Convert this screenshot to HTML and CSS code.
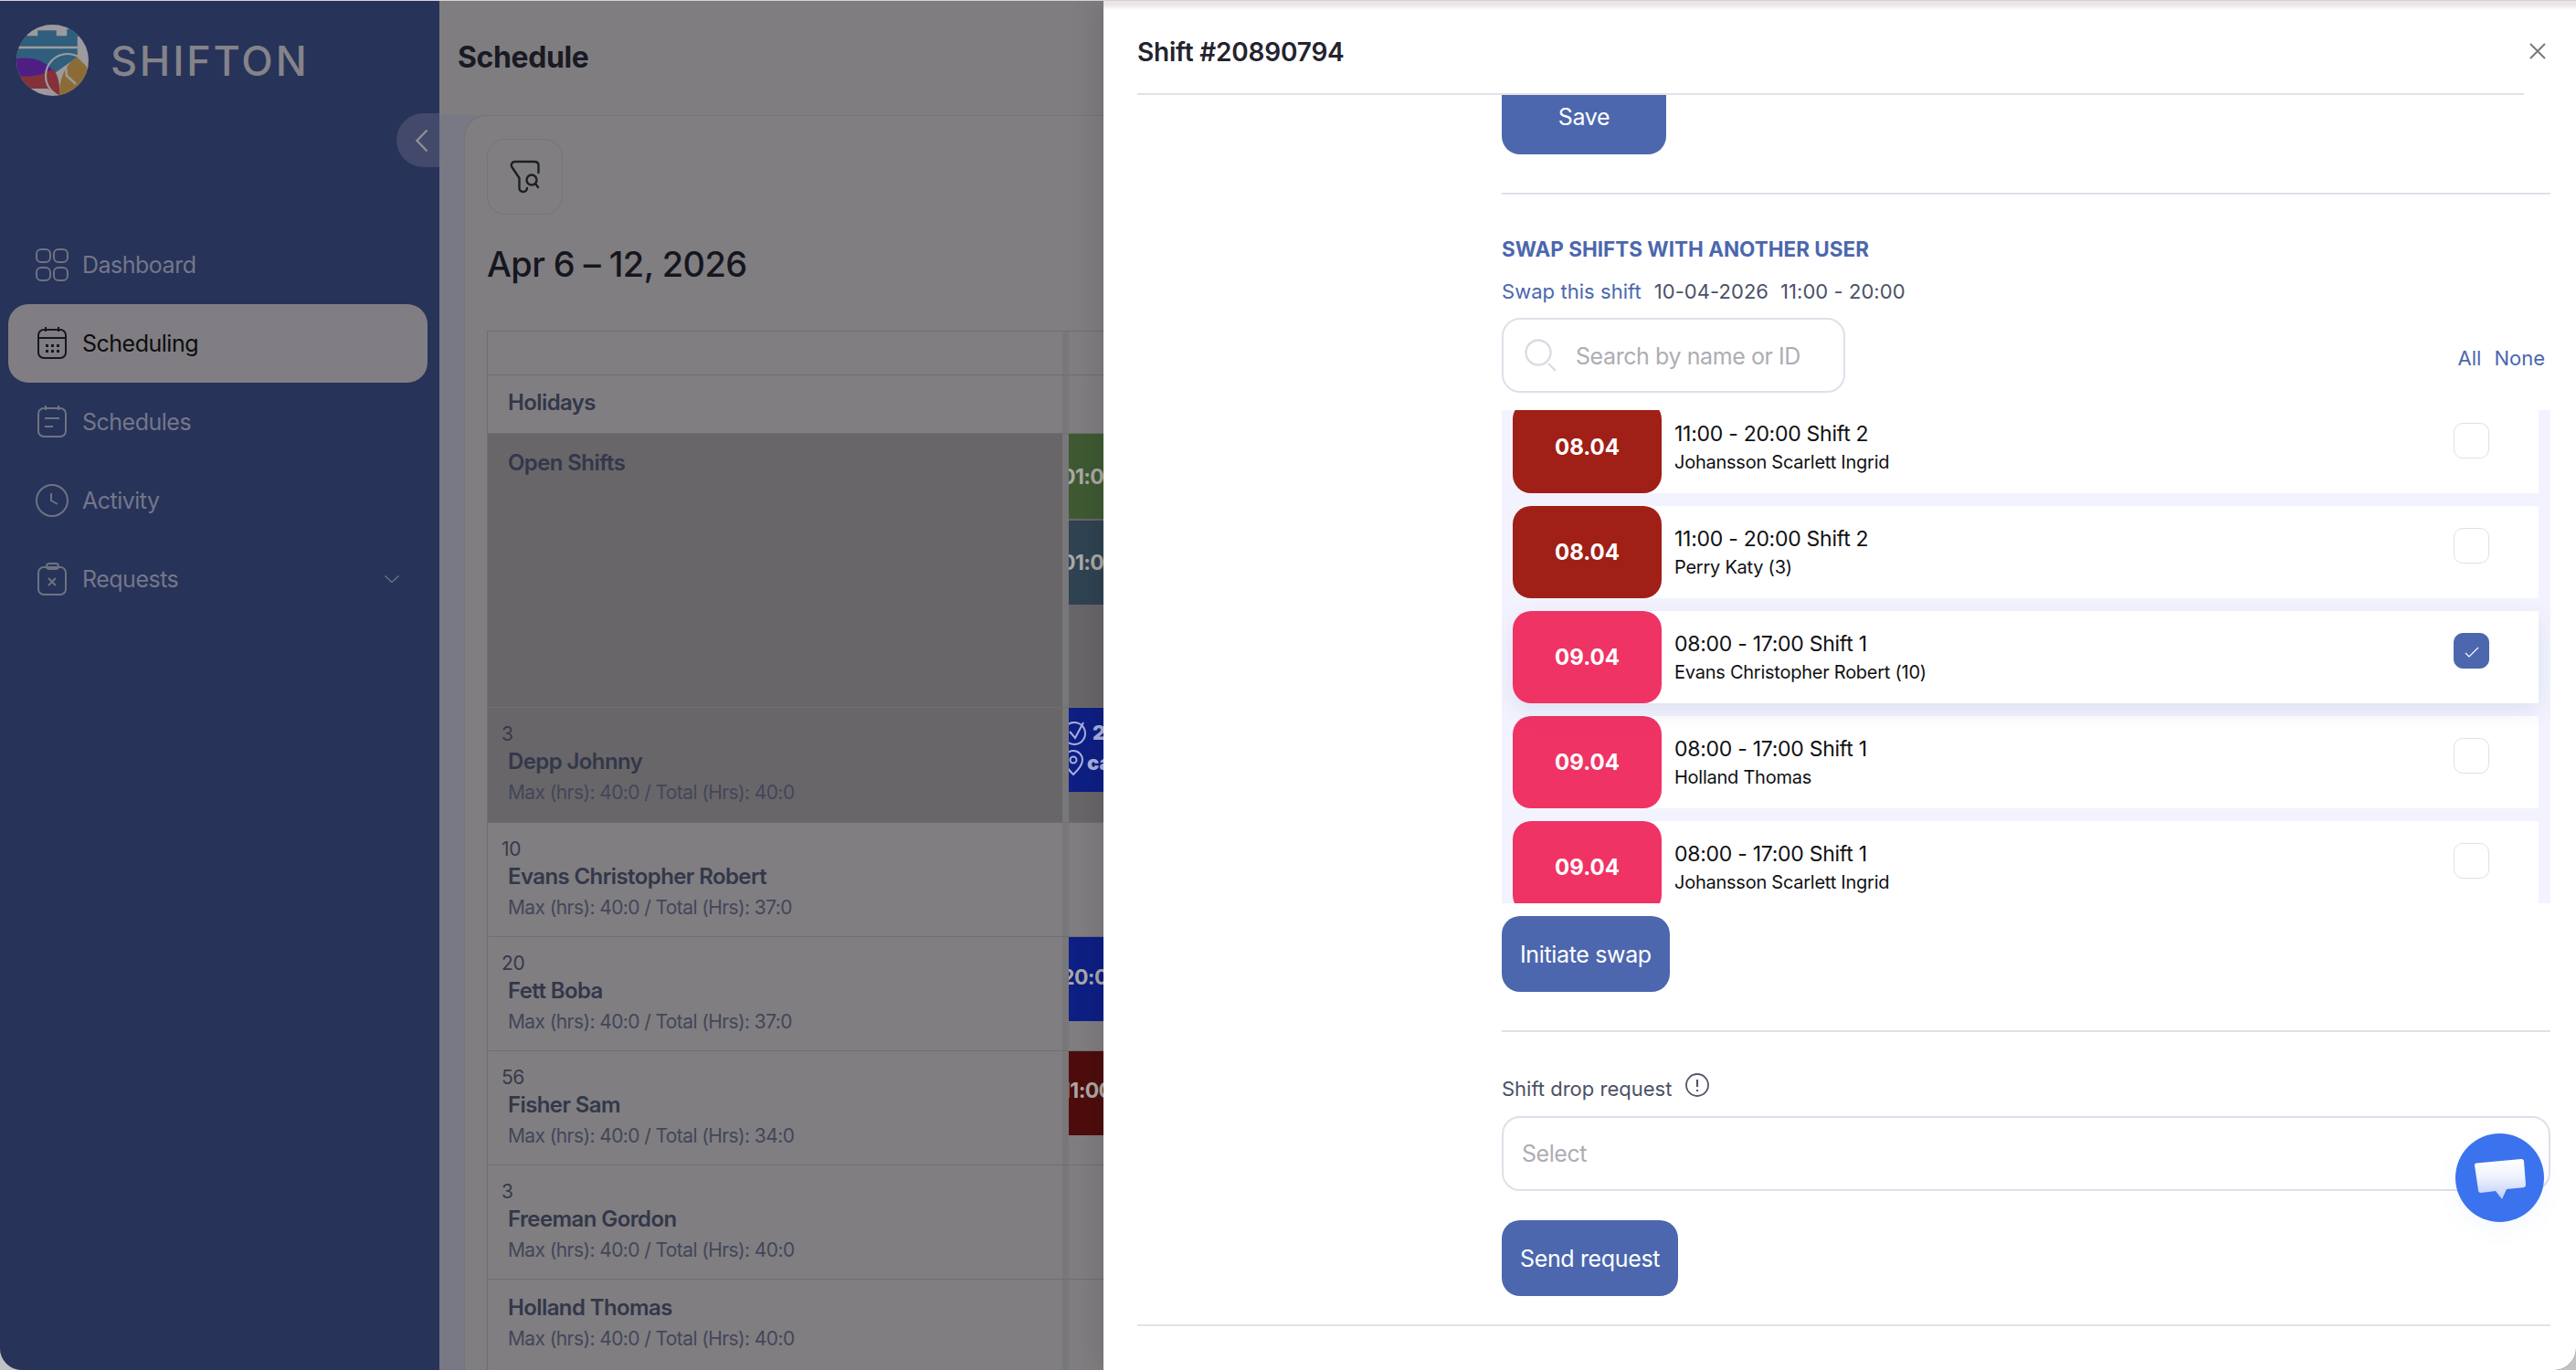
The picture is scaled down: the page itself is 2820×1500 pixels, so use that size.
FILE: index.html
```html
<!DOCTYPE html>
<html lang="en">
<head>
<meta charset="utf-8">
<title>Shifton Schedule</title>
<link rel="stylesheet" href="styles.css">
</head>
<body>
<div class="page">
  <aside class="sidebar">
    <div class="brand">
      <svg class="logo" viewBox="18 27 79 78" aria-hidden="true">
        <defs><clipPath id="lc"><ellipse cx="57.5" cy="66" rx="39.5" ry="39"/></clipPath></defs>
        <g clip-path="url(#lc)">
          <rect x="18" y="27" width="80" height="80" fill="#9c9a9e"/>
          <path d="M18 27H86V62L74 70 60 80 18 66Z" fill="#2f5f7c"/>
          <path d="M18 64C34 62 48 65 59 78L50 84H18Z" fill="#4f1e85"/>
          <path d="M18 83C30 84 44 84 52 78L59 76C64 84 66 94 65 105L52 97H26Z" fill="#83323a"/>
          <path d="M65 105C65 90 68 74 84 62L98 76V105Z" fill="#8b6c37"/>
          <path d="M30 38H40V32H63V38H72V30M20 52H86V40M86 52V62" fill="none" stroke="#9c9a9e" stroke-width="2.5"/>
          <path d="M30 27H86V32H72V38H63V32H40V38H30Z" fill="#9c9a9e"/>
          <circle cx="74" cy="83" r="24" fill="none" stroke="#9c9a9e" stroke-width="2.2"/>
          <path d="M72 72L73 83 83 92" fill="none" stroke="#9c9a9e" stroke-width="2.5"/>
        </g>
      </svg>
      <span class="wordmark">SHIFTON</span>
    </div>
    <button class="collapse" aria-label="Collapse">
      <svg width="14" height="26" viewBox="0 0 14 26"><path d="M12.5 1.5L1.5 13l11 11.5" fill="none" stroke="#8f8e93" stroke-width="2.4"/></svg>
    </button>
    <nav class="menu">
      <a class="item">
        <svg class="ico" viewBox="0 0 36 36"><g fill="none" stroke="currentColor" stroke-width="2"><rect x="1" y="1" width="15" height="14" rx="5"/><rect x="20" y="1" width="15" height="14" rx="5"/><rect x="1" y="21" width="15" height="14" rx="5"/><rect x="20" y="21" width="15" height="14" rx="5"/></g></svg>
        <span>Dashboard</span>
      </a>
      <a class="item active">
        <svg class="ico" viewBox="0 0 36 36"><g fill="none" stroke="currentColor" stroke-width="2"><rect x="3" y="3" width="30" height="31" rx="6"/><path d="M3 12H33M11 0V5M25 0V5"/></g><g fill="currentColor"><rect x="11" y="19" width="3" height="3"/><rect x="17" y="19" width="3" height="3"/><rect x="23" y="19" width="3" height="3"/><rect x="11" y="25" width="3" height="3"/><rect x="17" y="25" width="3" height="3"/><rect x="23" y="25" width="3" height="3"/></g></svg>
        <span>Scheduling</span>
      </a>
      <a class="item">
        <svg class="ico" viewBox="0 0 36 36"><g fill="none" stroke="currentColor" stroke-width="2"><rect x="3" y="3" width="30" height="31" rx="6"/><path d="M11 0V5M25 0V5M10 14H26M10 23H19"/></g></svg>
        <span>Schedules</span>
      </a>
      <a class="item">
        <svg class="ico" viewBox="0 0 36 36"><g fill="none" stroke="currentColor" stroke-width="2"><circle cx="18" cy="18" r="17"/><path d="M17 10V18L24 22"/></g></svg>
        <span>Activity</span>
      </a>
      <a class="item">
        <svg class="ico" viewBox="0 0 36 36"><g fill="none" stroke="currentColor" stroke-width="2"><rect x="3" y="5" width="30" height="30" rx="6"/><rect x="12" y="1" width="13" height="6" rx="3"/><path d="M14 17L22 25M22 17L14 25"/></g></svg>
        <span>Requests</span>
        <svg class="caret" viewBox="0 0 16 8"><path d="M.5.5L8 7.5 15.5.5" fill="none" stroke="currentColor" stroke-width="1.2"/></svg>
      </a>
    </nav>
  </aside>

  <main class="main">
    <h1 class="page-title">Schedule</h1>
    <div class="content">
      <section class="card">
        <button class="filter" aria-label="Filter">
          <svg width="33" height="37" viewBox="0 0 33 37"><g fill="none" stroke="#1d1e24" stroke-width="2.4" stroke-linecap="round" stroke-linejoin="round"><path d="M6 2H27C30 2 31.500 3.500 31.500 6V14M6 2C2.500 2 .8 5 2.500 8L10.500 20V31C10.500 36 18.500 36.500 19 31"/><circle cx="24" cy="22" r="5.500"/><path d="M28 26L31 30"/></g></svg>
        </button>
        <h2 class="range">Apr 6 – 12, 2026</h2>
        <div class="table">
          <div class="row head"><div class="who"></div><div class="day"></div></div>
          <div class="row holidays"><div class="who"><div class="name">Holidays</div></div><div class="day"></div></div>
          <div class="row open dim">
            <div class="who"><div class="name">Open Shifts</div></div>
            <div class="day stack">
              <div class="ev green"><span>01:00</span></div>
              <div class="ev teal"><span>01:00</span></div>
            </div>
          </div>
          <div class="row dim emp">
            <div class="who"><div class="num">3</div><div class="name">Depp Johnny</div><div class="hrs">Max (hrs): 40:0 / Total (Hrs): 40:0</div></div>
            <div class="day">
              <div class="ev blue tall">
                <div class="meta"><svg width="26" height="28" viewBox="0 0 26 28"><g fill="none" stroke="#aab0dc" stroke-width="2"><circle cx="12" cy="15" r="12"/><path d="M7 13L13 20 22 3"/></g></svg><b>2</b></div>
                <div class="meta pin"><svg width="24" height="28" viewBox="0 0 24 28"><g fill="none" stroke="#aab0dc" stroke-width="2"><path d="M11 27C4 20 1 16 1 11A10 10 0 0 1 21 11C21 16 18 20 11 27Z"/><circle cx="11" cy="11" r="3.500"/></g></svg><b>ca</b></div>
              </div>
            </div>
          </div>
          <div class="row emp">
            <div class="who"><div class="num">10</div><div class="name">Evans Christopher Robert</div><div class="hrs">Max (hrs): 40:0 / Total (Hrs): 37:0</div></div>
            <div class="day"></div>
          </div>
          <div class="row emp">
            <div class="who"><div class="num">20</div><div class="name">Fett Boba</div><div class="hrs">Max (hrs): 40:0 / Total (Hrs): 37:0</div></div>
            <div class="day"><div class="ev blue short"><span>20:00</span></div></div>
          </div>
          <div class="row emp">
            <div class="who"><div class="num">56</div><div class="name">Fisher Sam</div><div class="hrs">Max (hrs): 40:0 / Total (Hrs): 34:0</div></div>
            <div class="day"><div class="ev red short"><span>11:00</span></div></div>
          </div>
          <div class="row emp">
            <div class="who"><div class="num">3</div><div class="name">Freeman Gordon</div><div class="hrs">Max (hrs): 40:0 / Total (Hrs): 40:0</div></div>
            <div class="day"></div>
          </div>
          <div class="row emp nonum">
            <div class="who"><div class="name">Holland Thomas</div><div class="hrs">Max (hrs): 40:0 / Total (Hrs): 40:0</div></div>
            <div class="day"></div>
          </div>
        </div>
      </section>
    </div>
  </main>

  <aside class="drawer">
    <header class="drawer-head">
      <h3 class="drawer-title">Shift #20890794</h3>
      <button class="close" aria-label="Close"><svg width="18" height="18" viewBox="0 0 18 18"><path d="M1 1L17 17M17 1L1 17" stroke="#7a7a7c" stroke-width="2" fill="none"/></svg></button>
    </header>
    <div class="drawer-body">
      <div class="form">
        <button class="btn save">Save</button>
        <hr class="rule first">
        <h4 class="swap-title">SWAP SHIFTS WITH ANOTHER USER</h4>
        <p class="swap-line"><span class="link">Swap this shift</span><span>10-04-2026</span><span>11:00 - 20:00</span></p>
        <div class="search-row">
          <div class="search">
            <svg width="36" height="36" viewBox="0 0 36 36"><g fill="none" stroke="#dcdbe3" stroke-width="2.400"><circle cx="15" cy="15" r="13.500"/><path d="M26 27L34 35"/></g></svg>
            <span>Search by name or ID</span>
          </div>
          <div class="pick"><span>All</span><span>None</span></div>
        </div>
        <div class="list">
          <div class="shift top-clip">
            <div class="date dark">08.04</div>
            <div class="info"><div class="t">11:00 - 20:00 Shift 2</div><div class="p">Johansson Scarlett Ingrid</div></div>
            <span class="check"></span>
          </div>
          <div class="shift">
            <div class="date dark">08.04</div>
            <div class="info"><div class="t">11:00 - 20:00 Shift 2</div><div class="p">Perry Katy (3)</div></div>
            <span class="check"></span>
          </div>
          <div class="shift selected">
            <div class="date pink">09.04</div>
            <div class="info"><div class="t">08:00 - 17:00 Shift 1</div><div class="p">Evans Christopher Robert (10)</div></div>
            <span class="check on"><svg width="16" height="12" viewBox="0 0 16 12"><path d="M1 7L5 11 15 1" fill="none" stroke="#fff" stroke-width="1.200"/></svg></span>
          </div>
          <div class="shift">
            <div class="date pink">09.04</div>
            <div class="info"><div class="t">08:00 - 17:00 Shift 1</div><div class="p">Holland Thomas</div></div>
            <span class="check"></span>
          </div>
          <div class="shift">
            <div class="date pink">09.04</div>
            <div class="info"><div class="t">08:00 - 17:00 Shift 1</div><div class="p">Johansson Scarlett Ingrid</div></div>
            <span class="check"></span>
          </div>
        </div>
        <button class="btn initiate">Initiate swap</button>
        <hr class="rule second">
        <div class="drop-label"><span>Shift drop request</span>
          <svg width="26" height="26" viewBox="0 0 26 26"><circle cx="13" cy="13" r="12" fill="none" stroke="#55566b" stroke-width="1.800"/><path d="M13 7V15M13 18V20" stroke="#55566b" stroke-width="2.200" fill="none"/></svg>
        </div>
        <div class="select">Select</div>
        <button class="btn send">Send request</button>
      </div>
      <hr class="rule last">
    </div>
    <button class="chat" aria-label="Chat">
      <svg width="58" height="48" viewBox="0 0 58 48">
        <defs><linearGradient id="cg" x1="0" y1="0" x2="0" y2="1"><stop offset="0" stop-color="#ffffff"/><stop offset=".45" stop-color="#eef2fd"/><stop offset="1" stop-color="#bccef8"/></linearGradient></defs>
        <path d="M3 5.500L52 1C54 1 55 2 55 3.500L57 29C57 31 56 32 54 32.200L36 34 31 45 24 36 8 38C6 38 5 37 5 35L1 8C1 6.500 1.500 5.700 3 5.500Z" fill="url(#cg)"/>
      </svg>
    </button>
  </aside>
</div>
</body>
</html>
```
FILE: styles.css
```css
* { box-sizing: border-box; }
html, body { margin: 0; height: 100%; background: #c2c1c4; }
body { font-family: Inter, "Noto Sans", sans-serif; overflow: hidden; }
h1, h2, h3, h4, p { margin: 0; font-weight: inherit; }
button { font: inherit; border: 0; padding: 0; background: none; }

.page {
  position: relative;
  display: flex;
  width: 2820px;
  height: 1500px;
  overflow: hidden;
  border-radius: 0 0 24px 24px;
  border-top: 1px solid #d9cfd5;
  background: #7f7d80;
}

/* sidebar */
.sidebar { flex: 0 0 481px; background: #273358; position: relative; }
.brand { display: flex; align-items: center; height: 130px; padding-left: 18px; gap: 24px; }
.logo { width: 79px; height: 78px; flex: none; }
.wordmark {
  font-family: Inter, sans-serif;
  font-weight: 500;
  font-size: 45px;
  letter-spacing: 2.800px;
  color: #85838a;
  line-height: 1;
}
.collapse {
  position: absolute;
  left: 434px;
  top: 123px;
  width: 47px;
  height: 59px;
  border-radius: 30px 0 0 30px;
  background: #42496a;
  display: flex;
  align-items: center;
  justify-content: flex-end;
  padding-right: 12px;
}
.menu { display: flex; flex-direction: column; padding: 116px 13px 0 9px; }
.item {
  display: flex;
  align-items: center;
  height: 86px;
  padding-left: 30px;
  gap: 15px;
  color: #74778a;
  font-size: 25px;
  letter-spacing: -.5px;
  border-radius: 22px;
}
.item .ico { width: 36px; height: 36px; flex: none; color: #6f7283; }
.item.active { background: #807e82; color: #0d0d0f; }
.item.active .ico { color: #17181c; }
.caret { width: 16px; height: 8px; margin-left: auto; margin-right: 31px; color: #74778a; }

/* main */
.main { flex: 1; display: flex; flex-direction: column; min-width: 0; background: #7f7d80; }
.page-title {
  flex: none;
  height: 125px;
  padding: 40px 0 0 20px;
  font-size: 32px;
  font-weight: 700;
  line-height: 44px;
  letter-spacing: -.4px;
  color: #191a24;
}
.content { flex: 1; min-height: 0; padding-left: 27px; background: #797885; }
.card {
  height: 100%;
  overflow: hidden;
  padding: 25px 0 0 24px;
  border-radius: 24px 0 0 0;
  border: 1px solid #747376;
  border-right: 0;
  border-bottom: 0;
  background: #807e81;
}
.filter {
  display: flex;
  align-items: center;
  justify-content: center;
  width: 83px;
  height: 83px;
  border: 1px solid #757477;
  border-radius: 20px;
}
.range {
  margin-top: 29px;
  font-size: 38px;
  font-weight: 500;
  line-height: 50px;
  letter-spacing: -.6px;
  color: #15161f;
}
.table { margin-top: 48px; border-top: 1px solid #6f6e71; border-left: 1px solid #6f6e71; }
.row { display: flex; border-bottom: 1px solid #6f6e71; }
.who { flex: 0 0 629px; padding-left: 22px; color: #33364a; }
.day { flex: 1; border-left: 7px solid #78777a; overflow: hidden; min-width: 0; }
.head { height: 48px; }
.holidays { height: 64px; }
.holidays .who { padding-top: 16px; }
.dim { background: #686669; border-bottom-color: #6f6d70; }
.open { height: 300px; }
.open .who { padding-top: 18px; }
.emp { height: 125px; }
.dim.emp { height: 126px; }
.emp .who { padding-top: 16px; }
.nonum .who { padding-top: 17px; }
.name { font-size: 24px; font-weight: 600; line-height: 28px; letter-spacing: -.6px; color: #33374a; }
.num { font-size: 21px; line-height: 26px; margin-left: -7px; letter-spacing: -.4px; color: #38394a; margin-bottom: 3px; }
.hrs { font-size: 21px; line-height: 28px; margin-top: 6px; letter-spacing: -.6px; color: #43465a; }
.stack { display: flex; flex-direction: column; gap: 2px; }
.ev { height: 92px; color: #aaa9a6; font-size: 23px; font-weight: 700; white-space: nowrap; overflow: hidden; }
.ev span { display: block; margin-left: -8px; line-height: 28px; letter-spacing: -.6px; }
.green { background: #3f5a33; height: 93px; padding-top: 33px; }
.teal { background: #2f4352; height: 92px; padding-top: 32px; }
.blue { background: #0e1f85; }
.red { background: #4e0d0c; }
.short { padding-top: 30px; }
.red.short { padding-top: 29px; }
.tall { padding-top: 10px; }
.meta { display: flex; align-items: center; gap: 6px; height: 33px; margin-left: -6px; color: #aab0dc; }
.meta.pin { gap: 2px; }
.meta b { font-size: 22px; }

/* drawer */
.drawer {
  position: absolute;
  top: 0;
  right: 0;
  bottom: 0;
  left: 1208px;
  background: #fff;
  box-shadow: -12px 0 26px rgba(0, 0, 0, .09);
  display: flex;
  flex-direction: column;
}
.drawer::before {
  content: "";
  position: absolute;
  left: 0;
  right: 0;
  top: 0;
  height: 10px;
  background: linear-gradient(#ebe3e8 40%, #fff);
}
.drawer-head {
  position: relative;
  flex: 0 0 103px;
  margin: 0 57px 0 37px;
  border-bottom: 2px solid #e2e2e6;
  display: flex;
  align-items: center;
  padding-top: 11px;
}
.drawer-title { font-size: 28px; font-weight: 600; color: #23242e; line-height: 36px; letter-spacing: -.2px; }
.close { position: absolute; left: 1524px; top: 46px; width: 18px; height: 18px; display: block; }
.drawer-body { flex: 1; overflow: hidden; padding: 0 28px 0 37px; }
.form { padding-left: 399px; }
.btn {
  display: block;
  background: #4c67ae;
  color: #fff;
  font-size: 25px;
  letter-spacing: -.35px;
  line-height: 34px;
  border-radius: 20px;
  height: 83px;
  padding: 0 20px;
}
.save { width: 180px; height: 65px; border-radius: 0 0 20px 20px; padding-bottom: 17px; }
.rule { border: 0; height: 2px; background: #e0dfea; margin: 0; }
.first { margin-top: 42px; }
.swap-title { margin-top: 47px; font-size: 22.500px; font-weight: 700; line-height: 26px; color: #4c67ae; }
.swap-line { display: flex; gap: 13px; margin-top: 18px; font-size: 22px; line-height: 30px; letter-spacing: .05px; color: #4b5268; }
.swap-line .link { color: #4c67ae; margin-right: 1px; }
.search-row { display: flex; align-items: flex-end; justify-content: space-between; margin-top: 14px; }
.search {
  display: flex;
  align-items: center;
  gap: 20px;
  width: 376px;
  height: 82px;
  padding: 2px 0 0 23px;
  border: 2px solid #e0dfea;
  border-radius: 20px;
  font-size: 25px;
  letter-spacing: -.42px;
  color: #aeacb4;
}
.search svg { margin-top: -2px; }
.pick { display: flex; gap: 14px; padding: 0 6px 23px 0; font-size: 22px; line-height: 30px; color: #4c67ae; }
.list {
  margin-top: 19px;
  height: 540px;
  overflow: hidden;
  background: #f2f3fe;
  padding: 0 13px 0 12px;
  display: flex;
  flex-direction: column;
  gap: 14px;
}
.shift {
  flex: 0 0 101px;
  display: flex;
  align-items: center;
  background: #fff;
  border-radius: 20px 0 0 20px;
}
.top-clip { margin-top: -10px; }
.selected { box-shadow: 0 8px 24px rgba(70, 70, 130, .1); position: relative; }
.date {
  flex: 0 0 163px;
  height: 101px;
  display: flex;
  align-items: center;
  justify-content: center;
  border-radius: 20px;
  color: #fff;
  font-size: 24px;
  font-weight: 700;
}
.dark { background: #a01f17; }
.pink { background: #ef3365; }
.info { flex: 1; padding-left: 14px; color: #101014; }
.t { font-size: 23px; line-height: 30px; letter-spacing: -.28px; }
.p { font-size: 20px; line-height: 28px; margin-top: 2px; letter-spacing: -.25px; }
.check {
  flex: none;
  width: 39px;
  height: 39px;
  margin: 0 54px 15px 0;
  border: 1.5px solid #e0dfea;
  border-radius: 10px;
  background: #fff;
  display: flex;
  align-items: center;
  justify-content: center;
}
.check.on { background: #4c67ae; border-color: #4c67ae; padding-top: 3px; }
.initiate { margin-top: 14px; }
.second { margin-top: 42px; }
.drop-label { display: flex; align-items: center; gap: 15px; margin-top: 47px; font-size: 22px; line-height: 30px; color: #4b5268; }
.drop-label svg { margin-top: -8px; }
.select {
  margin-top: 15px;
  height: 82px;
  padding: 0 20px;
  display: flex;
  align-items: center;
  border: 2px solid #e0dfea;
  border-radius: 20px;
  font-size: 25px;
  letter-spacing: -.45px;
  color: #aeacb4;
}
.send { margin-top: 32px; }
.last { margin-top: 31px; background: #dfe3ea; }
.chat {
  position: absolute;
  left: 1480px;
  top: 1240px;
  width: 97px;
  height: 97px;
  border-radius: 50%;
  background: #3b72ed;
  box-shadow: 0 8px 24px rgba(59, 114, 237, .06);
  display: flex;
  align-items: center;
  justify-content: center;
  padding-top: 4px;
}
```
